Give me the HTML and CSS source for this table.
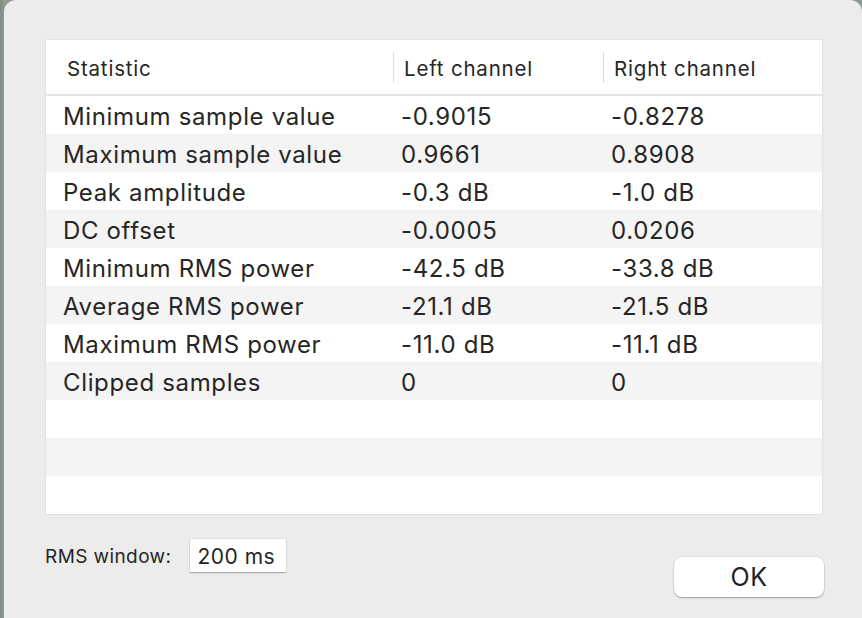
FILE: index.html
```html
<!DOCTYPE html>
<html>
<head>
<meta charset="utf-8">
<link rel="stylesheet" href="styles.css">
</head>
<body>
<div class="dialog">
  <div class="table">
    <div class="head">
      <div class="hcell first">Statistic</div>
      <div class="hcell">Left channel</div>
      <div class="hcell">Right channel</div>
    </div>
    <div class="row"><div class="c1">Minimum sample value</div><div class="c">-0.9015</div><div class="c">-0.8278</div></div>
    <div class="row alt"><div class="c1">Maximum sample value</div><div class="c">0.9661</div><div class="c">0.8908</div></div>
    <div class="row"><div class="c1">Peak amplitude</div><div class="c">-0.3 dB</div><div class="c">-1.0 dB</div></div>
    <div class="row alt"><div class="c1">DC offset</div><div class="c">-0.0005</div><div class="c">0.0206</div></div>
    <div class="row"><div class="c1">Minimum RMS power</div><div class="c">-42.5 dB</div><div class="c">-33.8 dB</div></div>
    <div class="row alt"><div class="c1">Average RMS power</div><div class="c">-21.1 dB</div><div class="c">-21.5 dB</div></div>
    <div class="row"><div class="c1">Maximum RMS power</div><div class="c">-11.0 dB</div><div class="c">-11.1 dB</div></div>
    <div class="row alt"><div class="c1">Clipped samples</div><div class="c">0</div><div class="c">0</div></div>
    <div class="row"></div>
    <div class="row alt"></div>
    <div class="row"></div>
  </div>
  <div class="footer">
    <div class="rms">
      <span class="label">RMS window:</span>
      <span class="field">200 ms</span>
    </div>
    <button class="ok">OK</button>
  </div>
</div>
</body>
</html>
```
FILE: styles.css
```css
html, body {
  margin: 0;
  padding: 0;
  width: 862px;
  height: 618px;
  overflow: hidden;
  font-family: Inter, "Helvetica Neue", "Liberation Sans", sans-serif;
  color: #262626;
}
body {
  padding-left: 4px;
  box-sizing: border-box;
  background: linear-gradient(to right, #7f8a81 0, #8f9a90 4px);
}
.dialog {
  width: 858px;
  height: 618px;
  background: #ececec;
  border-radius: 12px 12px 0 0;
  padding: 40px 0 0 42px;
  box-sizing: border-box;
}
.table {
  width: 776px;
  background: #fff;
  box-shadow: 0 0 0 1px #e2e2e2;
}
.head {
  display: grid;
  grid-template-columns: 347px 210px 219px;
  height: 54px;
  border-bottom: 2px solid #e4e4e4;
}
.hcell {
  display: flex;
  align-items: center;
  font-size: 20.5px;
  letter-spacing: 0.8px;
  padding-left: 11px;
  padding-top: 2px;
  position: relative;
}
.hcell.first {
  padding-left: 21px;
}
.hcell:not(.first)::before {
  content: "";
  position: absolute;
  left: 0;
  top: 12px;
  bottom: 11px;
  width: 1px;
  background: #dcdcdc;
}
.row {
  display: grid;
  grid-template-columns: 347px 210px 219px;
  height: 38px;
  align-items: center;
  font-size: 24px;
  letter-spacing: 0.65px;
  padding-top: 3px;
  box-sizing: border-box;
}
.row.alt {
  background: #f4f4f4;
}
.c1 {
  padding-left: 17px;
}
.c {
  padding-left: 8px;
}
.footer {
  display: flex;
  justify-content: space-between;
  align-items: flex-start;
  width: 779px;
  margin-left: -1px;
  margin-top: 25px;
}
.rms {
  display: flex;
  align-items: center;
  gap: 19px;
  font-size: 19px;
  letter-spacing: 0.4px;
}
.label {
  padding-top: 1px;
}
.field {
  display: inline-flex;
  align-items: center;
  width: 96px;
  height: 33px;
  box-sizing: border-box;
  background: #fff;
  padding-left: 7px;
  padding-top: 2px;
  font-size: 21px;
  letter-spacing: 0.5px;
  box-shadow: 0 1px 1px rgba(0,0,0,0.25), 0 0 0 0.5px rgba(0,0,0,0.08);
}
.ok {
  margin-top: 18px;
  width: 150px;
  height: 40px;
  border: none;
  border-radius: 8px;
  background: #fff;
  font-family: inherit;
  font-size: 25px;
  letter-spacing: 0.5px;
  color: #222;
  box-shadow: 0 1px 1.5px rgba(0,0,0,0.3), 0 0 0 0.5px rgba(0,0,0,0.1);
  padding: 0;
}
```
